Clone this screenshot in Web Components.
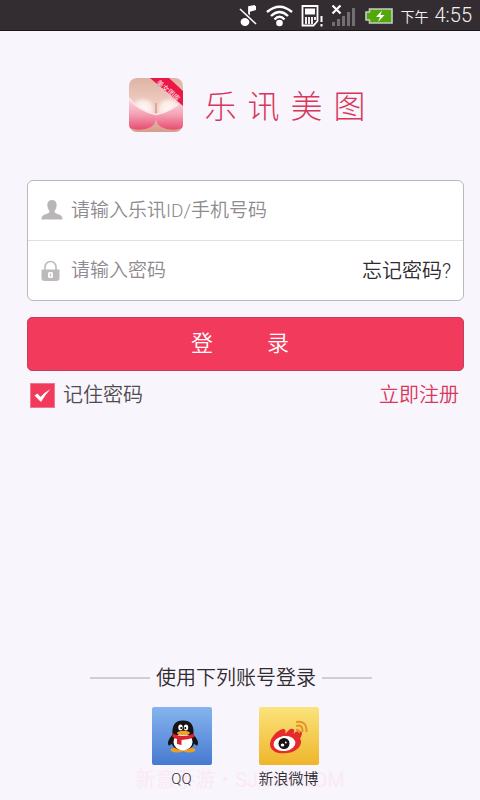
<!DOCTYPE html>
<html lang="zh-CN">
<head>
<meta charset="utf-8">
<meta name="viewport" content="width=device-width, initial-scale=1">
<title>乐讯美图</title>
<style>
	html, body {
		margin: 0;
		min-height: 100%;
	}

	body {
		--accent: #f23a5c;
		--accent-text: #d8375b;
		--line: #bdb8bd;
		background: #f9f5fc;
		color: #2e2a2f;
		font-family: Roboto, "Noto Sans CJK SC", sans-serif;
		font-weight: 350;
	}
</style>
</head>
<body>

<login-page>
	<status-bar slot="status" period="下午" time="4:55"></status-bar>
	<app-logo name="乐讯美图"></app-logo>
	<login-form></login-form>
	<social-login slot="footer" watermark="新意手游・SJXYX.COM">
		<span slot="title">使用下列账号登录</span>
		<social-button icon="qq">QQ</social-button>
		<social-button icon="weibo">新浪微博</social-button>
	</social-login>
</login-page>

<script>
class BaseElement extends HTMLElement {

	constructor() {
		super();
		this.attachShadow({ mode: "open" });
		this.shadowRoot.innerHTML = this.constructor.template(this);
	}

}

class LoginPage extends BaseElement {

	static template() {
		return `
			<style>
				:host {
					display: flex;
					flex-direction: column;
					min-height: 100vh;
				}

				main {
					display: flex;
					flex-direction: column;
					gap: 48px;
					padding: 47px 16px 24px 27px;
				}

				footer {
					margin-top: auto;
				}
			</style>
			<slot name="status"></slot>
			<main><slot></slot></main>
			<footer><slot name="footer"></slot></footer>
		`;
	}

}

class StatusBar extends BaseElement {

	static template(host) {
		return `
			<style>
				:host {
					display: flex;
					justify-content: flex-end;
					align-items: center;
					gap: 8px;
					height: 31px;
					padding-right: 8px;
					background: #332d31;
					box-shadow: inset 0 -1px #1d181b;
					color: #f4f2f3;
				}

				svg {
					display: block;
					height: 24px;
				}

				.battery {
					margin-left: 2px;
				}

				.clock {
					display: flex;
					align-items: baseline;
					gap: 6px;
					font-size: 14px;
					line-height: 24px;
				}

				.clock b {
					font-size: 20px;
					font-weight: inherit;
				}
			</style>
			<!-- muted -->
			<svg width="20" viewBox="0 0 20 24" fill="none" stroke="#fff">
				<path d="M11 15V3l6-1" stroke-width="1.8"/>
				<path d="M11 3l7-1v4l-7 2z" fill="#fff" stroke="none"/>
				<ellipse cx="7" cy="18" rx="4.4" ry="4" fill="#fff" stroke="none"/>
				<path d="M2 5l16 15" stroke="#332d31" stroke-width="4"/>
				<path d="M2 5l16 15" stroke-width="1.6"/>
			</svg>
			<!-- wifi -->
			<svg width="27" viewBox="0 0 27 24" fill="none" stroke="#fff" stroke-width="2.4">
				<path d="M1 8Q13.5-2.5 26 8M5 12Q13.5 4 22 12M8.500 15.500Q13.500 10 18.500 15.500"/>
				<circle cx="13.500" cy="19" r="3.300" fill="#fff" stroke="none"/>
			</svg>
			<!-- sim card -->
			<svg width="22" viewBox="0 0 22 24" fill="none" stroke="#fff">
				<path d="M1.500 2h15v15l-4 4.500h-11z" stroke-width="1.800"/>
				<path d="M4 4.500h10v6H4z" fill="#fff" stroke="none"/>
				<path d="M5 13v7M8 13v7M11 13v7M14 13v3" stroke-width="1.800"/>
				<path d="M20.500 12v6M20.500 20v2.500" stroke-width="2"/>
			</svg>
			<!-- signal -->
			<svg width="24" viewBox="0 0 24 24">
				<path d="M1 18h3v4H1zM6 15h3v7H6zM11 12h3v10h-3zM16 8h3v14h-3zM21 4h3v18h-3z" fill="#746e72"/>
				<path d="M1.500 1.500l8 8M9.500 1.500l-8 8" stroke="#fff" stroke-width="2.200"/>
			</svg>
			<!-- battery -->
			<svg class="battery" width="28" viewBox="0 0 28 24">
				<path d="M4.500 5H27v14H4.500v-3H1V8h3.500z" fill="#52a80b" stroke="#c9cbc7" stroke-width="1.600"/>
				<path d="M17 6.500l-6 6.500h4l-2 5 6.500-7h-4z" fill="#fff"/>
			</svg>
			<div class="clock"><span>${host.getAttribute("period")}</span><b>${host.getAttribute("time")}</b></div>
		`;
	}

}

class AppLogo extends BaseElement {

	static template(host) {
		const letters = [...host.getAttribute("name")];
		return `
			<style>
				:host {
					display: flex;
					justify-content: center;
					align-items: center;
					gap: 21px;
					height: 54px;
					padding-left: 4px;
				}

				h1 {
					display: flex;
					gap: 11px;
					margin: 0;
					padding-top: 4px;
					color: var(--accent-text);
					font-size: 32px;
					font-weight: 300;
					line-height: 40px;
				}
			</style>
			<svg width="54" height="54" viewBox="0 0 54 54">
				<defs>
					<clipPath id="tile"><rect width="54" height="54" rx="8"/></clipPath>
					<linearGradient id="skin" x2="0" y2="1">
						<stop stop-color="#dfb3a3"/><stop offset=".5" stop-color="#efcfc4"/><stop offset="1" stop-color="#d99c8d"/>
					</linearGradient>
					<radialGradient id="glow">
						<stop stop-color="#fffaf8"/><stop offset=".6" stop-color="#fbeae5"/><stop offset="1" stop-color="#ecc8bd"/>
					</radialGradient>
					<linearGradient id="pink" x2="0" y2="1">
						<stop stop-color="#fbdce4"/><stop offset=".5" stop-color="#f5a3b6"/><stop offset="1" stop-color="#e74c70"/>
					</linearGradient>
				</defs>
				<g clip-path="url(#tile)">
					<path d="M0 0h54v54H0z" fill="url(#skin)"/>
					<ellipse cx="14" cy="31" rx="13.500" ry="12" fill="url(#glow)"/>
					<ellipse cx="40" cy="31" rx="13.500" ry="12" fill="url(#glow)"/>
					<path d="M27 25v12" stroke="#c98676" stroke-width="1"/>
					<path d="M0 20Q9 33 27 37Q28 45 22 49Q12 54 0 50z" fill="url(#pink)"/>
					<path d="M54 21Q45 33 27 37Q26 45 32 49Q42 54 54 50z" fill="url(#pink)"/>
					<path d="M0 20Q9 33 27 36.500Q45 33 54 21" fill="none" stroke="#fce6ea" stroke-width="1.500"/>
					<path d="M21 0h19l14 13v15z" fill="#ea1748"/>
					<text x="39" y="15" fill="#ffc6d4" font-size="7" font-weight="500" text-anchor="middle" transform="rotate(41 39 13)">美女图库</text>
				</g>
			</svg>
			<h1>${letters.map(l => `<span>${l}</span>`).join("")}</h1>
		`;
	}

}

class TextField extends BaseElement {

	static template(host) {
		const icons = {
			user: `<path d="M11 0c-4 0-5 3-4.500 6.500.4 2.500 1.500 3.700 2 4.500.3 2-2 2.500-4.500 3.500-2.500 1-3.500 2-3.500 5h21c0-3-1-4-3.500-5-2.500-1-4.800-1.500-4.500-3.500.5-.8 1.600-2 2-4.500C16 3 15 0 11 0z" fill="#b9b5b9"/>`,
			lock: `<path d="M4 10V7a5.500 5.500 0 0 1 11 0v3" fill="none" stroke="#bdb9bd" stroke-width="1.600"/>
				<path d="M.5 9.500h18V18q0 3-3 3h-12q-3 0-3-3z" fill="#bdb9bd"/><rect x="7" y="12" width="5" height="6" rx="1.500" fill="#fff"/><path d="M9.500 13.500v3" stroke="#bdb9bd" stroke-width="1"/>`
		};
		const label = host.getAttribute("label");
		return `
			<style>
				:host {
					display: flex;
					align-items: center;
					gap: 8px;
					height: 59px;
					padding: 0 12px 0 13px;
				}

				label {
					flex: none;
				}

				svg {
					display: block;
				}

				input {
					flex: 1;
					min-width: 0;
					padding: 0;
					border: none;
					outline: none;
					background: none;
					color: inherit;
					font: inherit;
					font-size: 19px;
					line-height: 28px;
				}

				input::placeholder {
					color: #8f8a8f;
					opacity: 1;
				}
			</style>
			<label for="input" aria-label="${label}">
				<svg width="22" height="22" viewBox="0 0 22 22">${icons[host.getAttribute("icon")]}</svg>
			</label>
			<input id="input" type="${host.getAttribute("type") || "text"}" placeholder="${label}">
			<slot></slot>
		`;
	}

}

class CheckBox extends BaseElement {

	static template() {
		return `
			<style>
				:host {
					display: flex;
				}

				label {
					display: flex;
					align-items: center;
					gap: 8px;
					cursor: pointer;
				}

				.box {
					display: grid;
					width: 25px;
					height: 25px;
				}

				.box > * {
					grid-area: 1 / 1;
				}

				input {
					appearance: none;
					margin: 0;
					border: 1px solid #f17791;
					background: #fff;
				}

				input:checked {
					background: var(--accent);
				}

				input:not(:checked) + svg {
					visibility: hidden;
				}

				svg {
					pointer-events: none;
				}
			</style>
			<label>
				<span class="box">
					<input type="checkbox" checked>
					<svg viewBox="0 0 25 25"><path d="M4.500 12.500l3-2 3 3.500Q15 9 20.500 6Q15 12 11 19z" fill="#fff"/></svg>
				</span>
				<slot></slot>
			</label>
		`;
	}

}

class LoginForm extends BaseElement {

	static template() {
		return `
			<style>
				:host {
					display: block;
					font-size: 20px;
					line-height: 28px;
				}

				form {
					display: flex;
					flex-direction: column;
				}

				.fields {
					border: 1px solid var(--line);
					border-radius: 6px;
					background: #fff;
				}

				text-field + text-field {
					border-top: 1px solid #e2dfe2;
				}

				a {
					color: inherit;
					text-decoration: none;
				}

				button {
					display: flex;
					justify-content: center;
					align-items: center;
					gap: 54px;
					height: 54px;
					margin: 16px 0 10px;
					padding: 0 11px 0 0;
					border: 1px solid #c2405f;
					border-radius: 5px;
					background: var(--accent);
					color: #fff;
					font: inherit;
					font-size: 22px;
					cursor: pointer;
				}

				button:active {
					background: #d92c4d;
				}

				.options {
					display: flex;
					justify-content: space-between;
					align-items: center;
					padding: 0 5px 0 3px;
				}

				check-box {
					color: #504b50;
				}

				.register {
					color: var(--accent-text);
				}
			</style>
			<form>
				<div class="fields">
					<text-field icon="user" label="请输入乐讯ID/手机号码"></text-field>
					<text-field icon="lock" type="password" label="请输入密码"><a href="#forgot">忘记密码?</a></text-field>
				</div>
				<button type="submit"><span>登</span><span>录</span></button>
				<div class="options">
					<check-box>记住密码</check-box>
					<a class="register" href="#register">立即注册</a>
				</div>
			</form>
		`;
	}

	constructor() {
		super();
		this.shadowRoot.querySelector("form").onsubmit = (e) => e.preventDefault();
	}

}

class SocialLogin extends BaseElement {

	static template(host) {
		return `
			<style>
				:host {
					display: block;
					position: relative;
					padding-bottom: 9px;
				}

				.title {
					display: flex;
					justify-content: center;
					align-items: center;
					gap: 6px;
					padding-right: 18px;
					font-size: 20px;
					line-height: 28px;
				}

				.title::before,
				.title::after {
					content: "";
					width: 60px;
					height: 2px;
					background: #d4ced3;
				}

				.title::after {
					width: 50px;
				}

				.list {
					position: relative;
					display: flex;
					justify-content: center;
					gap: 47px;
					margin-top: 15px;
					padding-right: 10px;
				}

				.watermark {
					position: absolute;
					left: 0;
					right: 0;
					bottom: 6px;
					color: #fbe9f8;
					font-size: 20px;
					font-weight: 400;
					line-height: 28px;
					text-align: center;
				}
			</style>
			<div class="title"><slot name="title"></slot></div>
			<div class="watermark">${host.getAttribute("watermark")}</div>
			<div class="list"><slot></slot></div>
		`;
	}

}

class SocialButton extends BaseElement {

	static template(host) {
		const icons = {
			qq: `
				<defs><linearGradient id="bg" x2="0" y2="1"><stop stop-color="#86b4ee"/><stop offset="1" stop-color="#467ad0"/></linearGradient></defs>
				<rect width="60" height="58" rx="2" fill="url(#bg)"/>
				<path d="M21 27q-7 8-4.500 11.500 2.500 0 5-4zM41 27q7 8 4.500 11.500-2.500 0-5-4z" fill="#161315"/>
				<ellipse cx="25" cy="43" rx="6.500" ry="2.500" fill="#ef9c20"/>
				<ellipse cx="37" cy="43" rx="6.500" ry="2.500" fill="#ef9c20"/>
				<path d="M31 13.500c-9 0-11 6-10.500 13.500-2.500 6-2 16 10.500 16s13-10 10.500-16c.5-7.500-1.500-13.500-10.500-13.500z" fill="#161315"/>
				<ellipse cx="31" cy="35" rx="9.500" ry="8.500" fill="#fff"/>
				<ellipse cx="28.500" cy="20.500" rx="2.200" ry="3" fill="#fff"/><ellipse cx="34" cy="20.500" rx="2.200" ry="3" fill="#fff"/>
				<circle cx="29.200" cy="21" r="1"/><circle cx="33.300" cy="21" r="1"/>
				<ellipse cx="31.500" cy="26" rx="6.500" ry="2.200" fill="#f5a51d"/>
				<path d="M21 26.500q10 5 20.500 0l1 3.500q-6 3-13 3v5l-4.500-1v-5q-2.500-.5-5-2.500z" fill="#d7222f"/>
			`,
			weibo: `
				<defs><linearGradient id="bg" x2="0" y2="1"><stop stop-color="#fbe37c"/><stop offset="1" stop-color="#efb52a"/></linearGradient></defs>
				<rect width="60" height="58" rx="2" fill="url(#bg)"/>
				<path d="M11 37c0-6 7-14 13-15 3-.4 3 3 2 5 4-4 5-6 8-5 2 .8 1 3 .5 5 2-3 6-4 8-2 1.500 2-1 5-1.500 7 2 2 1 6-1.500 9-5 5-14 6-20 5C15 45 11 42 11 37z" fill="#e52b2e"/>
				<ellipse cx="25.500" cy="36.500" rx="11" ry="7.500" fill="#fff" transform="rotate(-8 25.500 36.500)"/>
				<circle cx="25" cy="36.500" r="5.500" fill="#171214"/>
				<ellipse cx="23.500" cy="38" rx="1.800" ry="1.500" fill="#fff"/><circle cx="26.800" cy="35.500" r=".9" fill="#fff"/>
				<path d="M37 15Q48 13 47.500 25M37 19Q44 17 43.500 25M37 23Q40.500 22 40 26" fill="none" stroke="#e3932b" stroke-width="2"/>
			`
		};
		return `
			<style>
				:host {
					display: block;
				}

				button {
					display: flex;
					flex-direction: column;
					align-items: center;
					gap: 2px;
					width: 60px;
					padding: 0;
					border: none;
					background: none;
					color: inherit;
					font: inherit;
					font-size: 15px;
					line-height: 24px;
					white-space: nowrap;
					cursor: pointer;
				}

				svg {
					display: block;
				}
			</style>
			<button type="button">
				<svg width="60" height="58" viewBox="0 0 60 58">${icons[host.getAttribute("icon")]}</svg>
				<slot></slot>
			</button>
		`;
	}

}

customElements.define("status-bar", StatusBar);
customElements.define("app-logo", AppLogo);
customElements.define("text-field", TextField);
customElements.define("check-box", CheckBox);
customElements.define("login-form", LoginForm);
customElements.define("social-button", SocialButton);
customElements.define("social-login", SocialLogin);
customElements.define("login-page", LoginPage);
</script>
</body>
</html>
